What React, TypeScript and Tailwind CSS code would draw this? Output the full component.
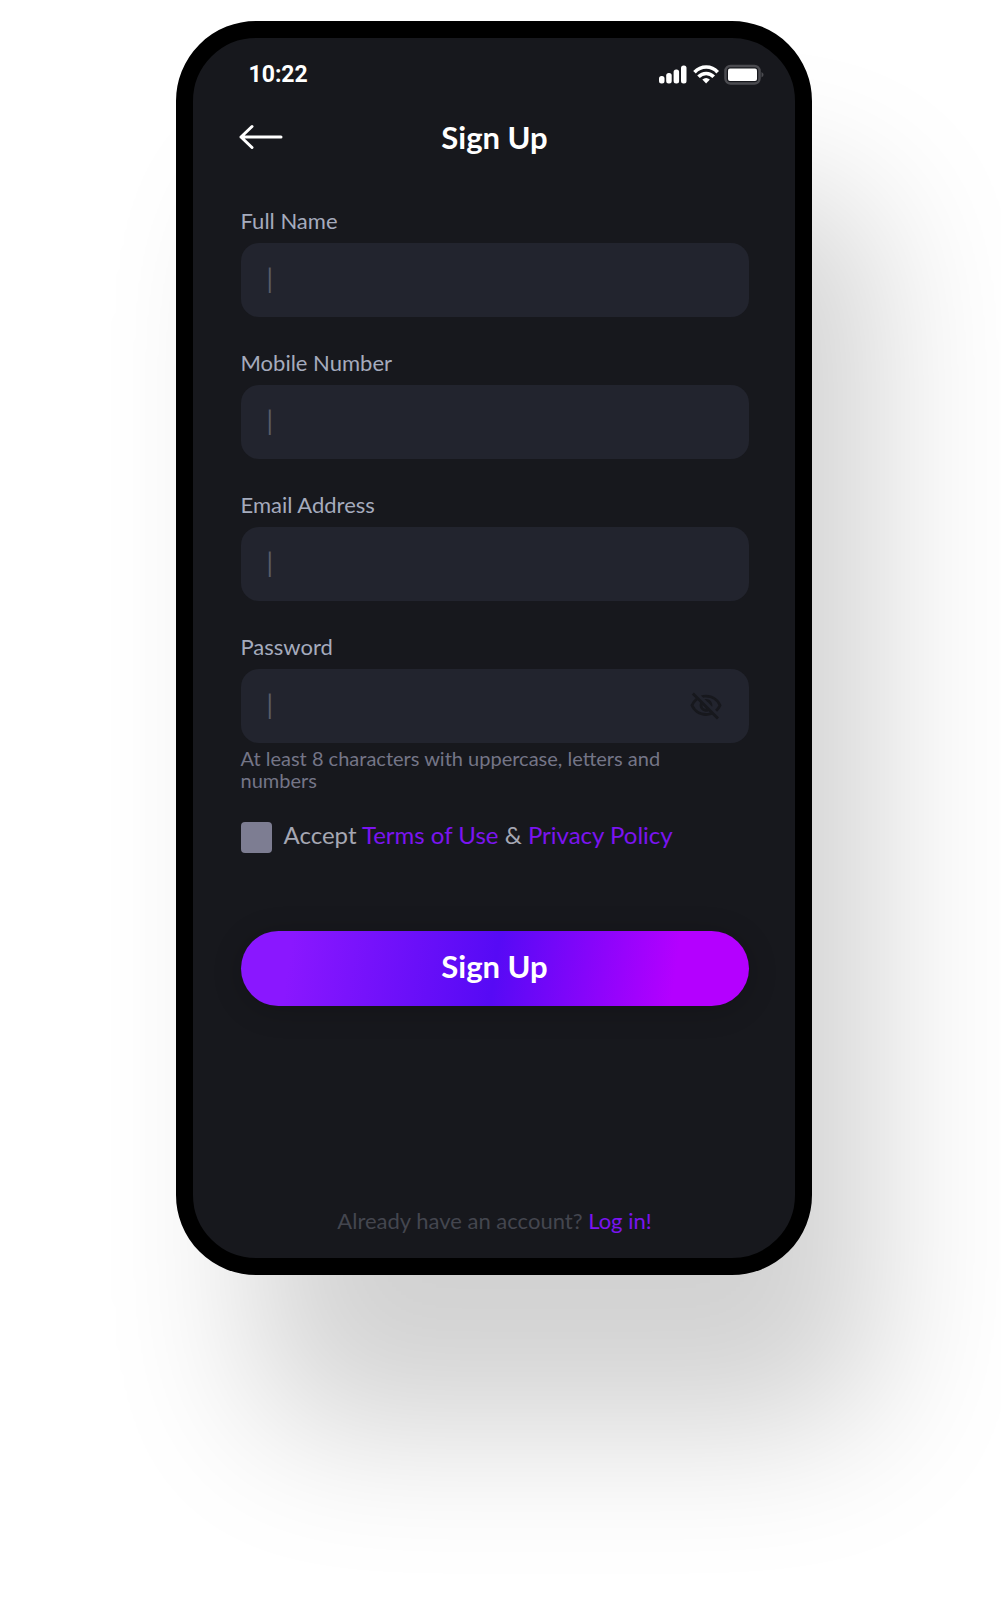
import type { InputHTMLAttributes, ReactNode } from "react";
import { MdOutlineVisibilityOff } from "react-icons/md";

function StatusIcons() {
  return (
    <svg width="105" height="22" viewBox="0 0 105 22" fill="none" aria-hidden="true">
      <g fill="#fff">
        <rect x="0" y="12" width="5.500" height="7.500" rx="2.500" />
        <rect x="7.200" y="9" width="5.500" height="10.500" rx="2.500" />
        <rect x="14.600" y="5.500" width="5.500" height="14" rx="2.500" />
        <rect x="22" y="1.500" width="5.500" height="18" rx="2.500" />
      </g>
      <g stroke="#fff" strokeWidth="3.600">
        <path d="M35.500 8.200C42 1.300 52.500 1.300 58.700 8.200" />
        <path d="M39.500 12.800C43.800 8.300 50.500 8.300 54.700 12.800" />
      </g>
      <path d="M43.300 15.600Q47.100 12.600 50.900 15.600L47.100 19.500Z" fill="#fff" />
      <rect x="66.500" y="2" width="34" height="17.500" rx="5" stroke="#4b4b50" strokeWidth="2.500" />
      <rect x="69" y="4.500" width="29" height="12.500" rx="2" fill="#fff" />
      <path d="M102.500 8Q104.500 9 104.500 10.800T102.500 13.600Z" fill="#4b4b50" />
    </svg>
  );
}

type FieldProps = InputHTMLAttributes<HTMLInputElement> & {
  id: string;
  label: string;
  children?: ReactNode;
};

function Field({ id, label, children, ...input }: FieldProps) {
  return (
    <div className="flex flex-col gap-2">
      <label htmlFor={id} className="text-[22px] leading-7 text-[#a5abbd]">
        {label}
      </label>
      <div className="flex h-[74px] items-center rounded-[18px] bg-[#22242e] pr-[26px] pl-[26px]">
        <input
          id={id}
          placeholder="|"
          className="min-w-0 flex-1 bg-transparent pb-1 text-[26px] leading-8 text-[#a5abbd] outline-none placeholder:text-[#5a5c68]"
          {...input}
        />
        {children}
      </div>
    </div>
  );
}

export default function App() {
  return (
    <div className="flex min-h-screen justify-center overflow-hidden bg-white pt-[21px] pr-[14px] pb-20 font-['Lato',sans-serif]">
      <main className="flex min-h-[1254px] w-full max-w-[636px] flex-col self-start rounded-[80px] border-[17px] border-black bg-[#17181d] pr-[46px] pb-[23px] pl-12 shadow-[72px_162px_150px_-8px_rgba(0,0,0,0.18)]">
        <div className="-mr-[15px] flex h-[74px] items-center justify-between pl-2">
          <time className="font-['Roboto',sans-serif] text-[23px] font-bold text-white">10:22</time>
          <StatusIcons />
        </div>

        <header className="grid h-[50px] grid-cols-[1fr_auto_1fr] items-center">
          <button type="button" aria-label="Back" className="-ml-0.5 justify-self-start text-white">
            <svg width="44" height="26" viewBox="0 0 44 26" fill="none" stroke="currentColor" strokeWidth="3" strokeLinecap="round" strokeLinejoin="round" aria-hidden="true">
              <path d="M42 13H2M13 2.500L2 13l11 10.500" />
            </svg>
          </button>
          <h1 className="text-[31px] leading-9 font-bold text-white">Sign Up</h1>
        </header>

        <form className="flex flex-col pt-[45px]" onSubmit={(event) => event.preventDefault()}>
          <div className="flex flex-col gap-8">
            <Field id="name" label="Full Name" type="text" />
            <Field id="mobile" label="Mobile Number" type="tel" />
            <Field id="email" label="Email Address" type="email" />
            <Field id="password" label="Password" type="password">
              <button type="button" aria-label="Show password" className="text-[#17181d]">
                <MdOutlineVisibilityOff size={34} />
              </button>
            </Field>
          </div>
          <p className="pt-1 text-[20px] leading-[22px] text-[#747587]">
            At least 8 characters with uppercase, letters and
            <br />
            numbers
          </p>

          <div className="flex items-center gap-3 pt-[30px] text-[24px] text-[#a5a7b3]">
            <input
              id="terms"
              type="checkbox"
              className="size-[31px] shrink-0 appearance-none rounded-[4px] bg-[#7d7d92] checked:bg-[#7b14f0]"
            />
            <label htmlFor="terms" className="pb-1 leading-7">
              Accept{" "}
              <a href="#terms" className="text-[#7b14f0]">
                Terms of Use
              </a>{" "}
              &amp;{" "}
              <a href="#privacy" className="text-[#7b14f0]">
                Privacy Policy
              </a>
            </label>
          </div>

          <button
            type="submit"
            className="mt-[78px] h-[75px] rounded-full bg-[linear-gradient(98deg,#8a17ff_10%,#560af5_50%,#b400ff_85%)] pb-1 text-[31px] font-bold text-white shadow-[0_4px_30px_rgba(0,0,0,0.2)]"
          >
            Sign Up
          </button>
        </form>

        <p className="mt-auto text-center text-[22px] leading-7 text-[#44464f]">
          Already have an account?{" "}
          <a href="#login" className="text-[#7b14f0]">
            Log in!
          </a>
        </p>
      </main>
    </div>
  );
}
